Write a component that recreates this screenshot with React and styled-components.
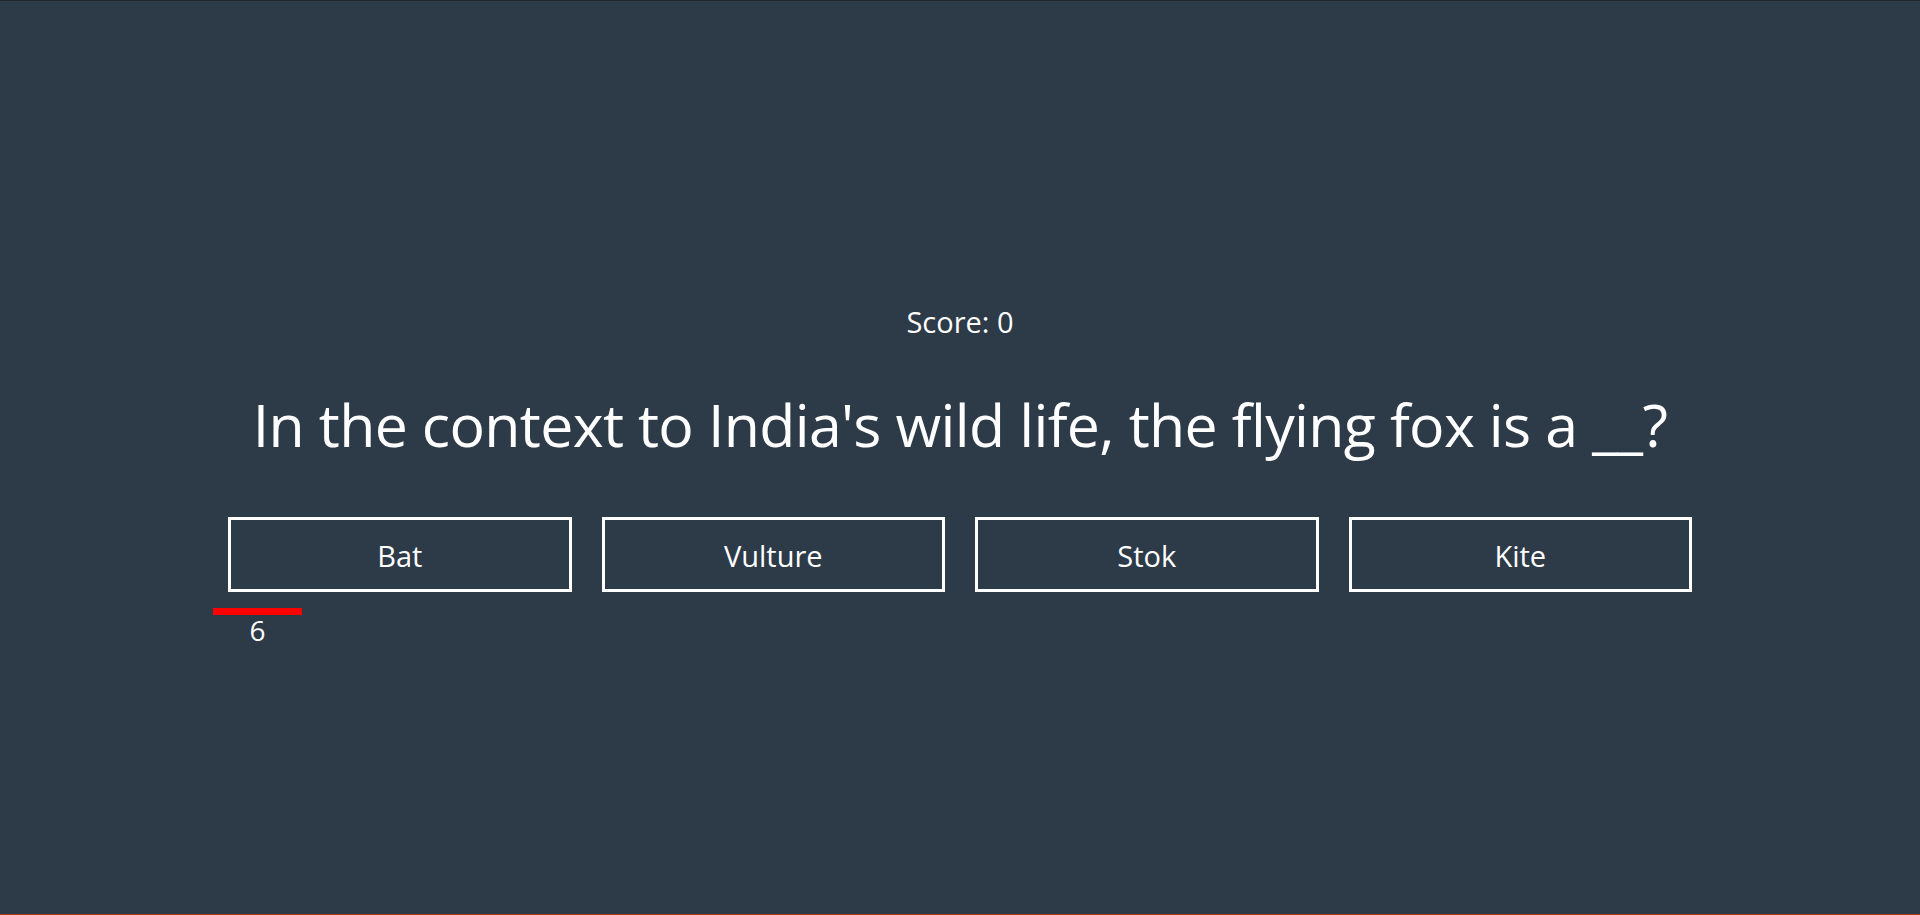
import styled, { createGlobalStyle } from "styled-components";

const QUESTION = {
  text: "In the context to India's wild life, the flying fox is a __?",
  options: ["Bat", "Vulture", "Stok", "Kite"],
};

const TIME_LIMIT = 6;
const BAR_MAX = 89;

const GlobalStyle = createGlobalStyle`
  html, body {
    margin: 0;
    padding: 0;
  }
  body {
    background: #2d3a48;
    font-family: "Open Sans", "Noto Sans", sans-serif;
    color: #fff;
  }
`;

function App() {
  const timeLeft = 6;
  const barWidth = (timeLeft / TIME_LIMIT) * BAR_MAX;

  return (
    <>
      <GlobalStyle />
      <Page>
        <Quiz>
          <Score>Score: 0</Score>
          <Question>{QUESTION.text}</Question>
          <Answers>
            {QUESTION.options.map((opt) => (
              <AnswerBtn key={opt}>{opt}</AnswerBtn>
            ))}
          </Answers>
          <Timer>
            <TimerBar style={{ width: barWidth }} />
            <TimerCount>{timeLeft}</TimerCount>
          </Timer>
        </Quiz>
      </Page>
    </>
  );
}

export default App;

const Page = styled.div`
  box-sizing: border-box;
  height: 915px;
  border-top: 1px solid #23272d;
  border-bottom: 1px solid #b83a1e;
  background: #2d3a48;
  overflow: hidden;
`;

const Quiz = styled.div`
  width: 1494px;
  margin: 0 auto;
  padding-top: 301px;
  display: flex;
  flex-direction: column;
  align-items: center;
`;

const Score = styled.div`
  font-size: 29px;
  line-height: 40px;
`;

const Question = styled.h1`
  margin: 42px 0 0;
  font-size: 59px;
  font-weight: 400;
  line-height: 80px;
  letter-spacing: -0.65px;
  white-space: nowrap;
`;

const Answers = styled.div`
  box-sizing: border-box;
  width: 100%;
  margin-top: 53px;
  padding: 0 15px;
  display: grid;
  grid-template-columns: repeat(4, 1fr);
  gap: 30px;
`;

const AnswerBtn = styled.button`
  height: 75px;
  padding: 2px 0 0;
  background: transparent;
  border: 3px solid #fff;
  color: #fff;
  font-family: "Open Sans", "Noto Sans", sans-serif;
  font-size: 29px;
  cursor: pointer;
  display: flex;
  align-items: center;
  justify-content: center;
`;

const Timer = styled.div`
  align-self: flex-start;
  width: 89px;
  margin-top: 16px;
  display: flex;
  flex-direction: column;
  align-items: center;
`;

const TimerBar = styled.div`
  align-self: flex-start;
  height: 7px;
  background: #ff0000;
`;

const TimerCount = styled.div`
  margin-top: 2px;
  font-size: 28px;
  line-height: 26px;
`;
